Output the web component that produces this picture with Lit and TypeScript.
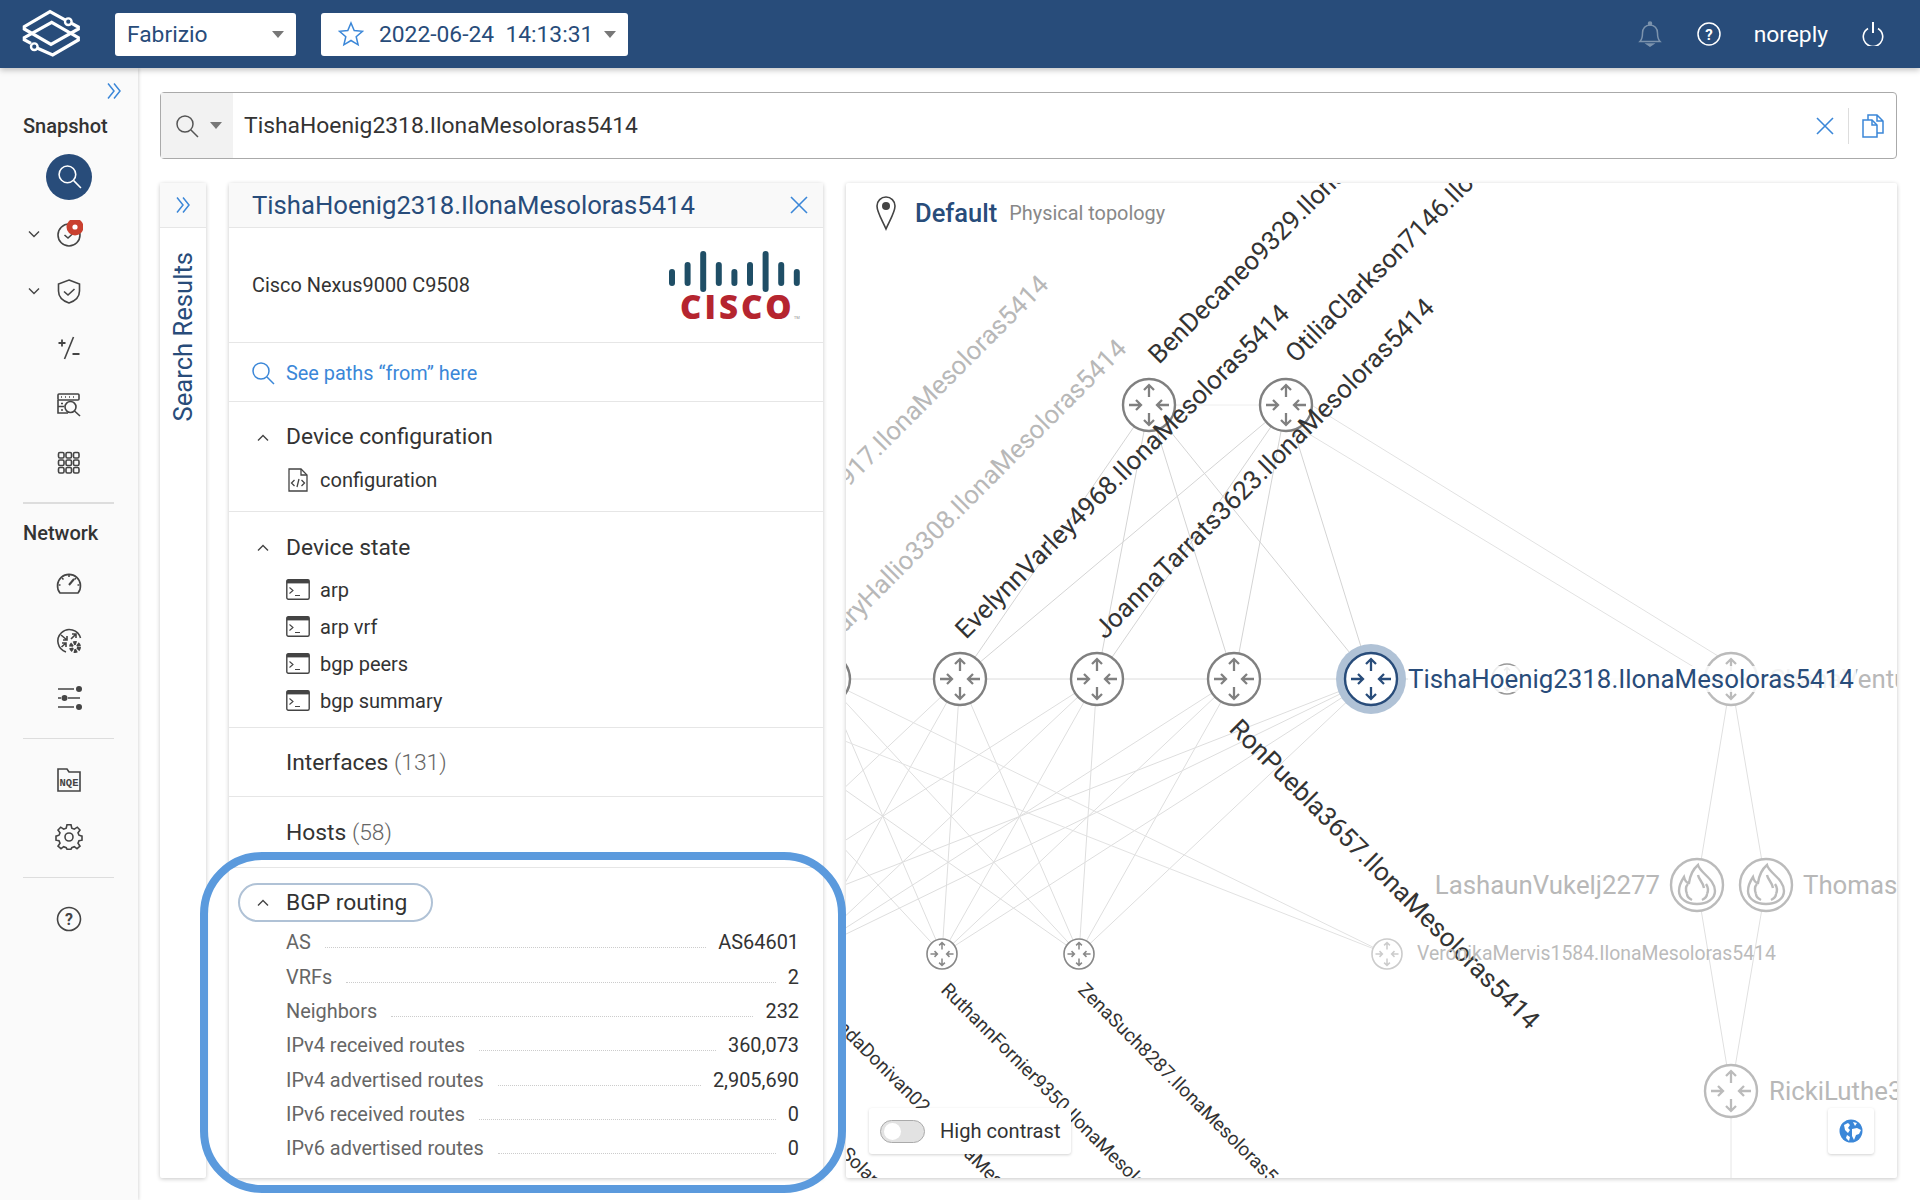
import { LitElement, html, svg, css } from "lit";
import { customElement } from "lit/decorators.js";

const NAVY = "#284c7a";
const tops = [687, 824, 960, 1097, 1234, 1371];
const bots = [668, 805, 942, 1079];

function router(cx: number, cy: number, r: number, c: string, sw = 2.4) {
  const k = r / 26;
  const a = 20 * k, b = 8 * k, h = 5 * k;
  return svg`<g stroke=${c} fill="none" stroke-width=${sw} transform="translate(${cx} ${cy})">
    <circle r=${r} fill="#fff"/>
    <path stroke-width=${sw * 0.95} d="M0 ${-b}V${-a}M${-h} ${-a + h}L0 ${-a}L${h} ${-a + h}
      M0 ${b}V${a}M${-h} ${a - h}L0 ${a}L${h} ${a - h}
      M${-a} 0H${-b}M${-b - h} ${-h}L${-b} 0L${-b - h} ${h}
      M${a} 0H${b}M${b + h} ${-h}L${b} 0L${b + h} ${h}"/>
  </g>`;
}
function fire(cx: number, cy: number) {
  return svg`<g stroke="#bbb" fill="none" stroke-width="2.4" transform="translate(${cx} ${cy})">
    <circle r="26" fill="#fff"/>
    <path d="M1 -20C3 -12 18 -6 18 6C18 14 10 19 0 19C-10 19 -18 14 -18 6C-18 0 -15 -5 -13 -8C-12 -4 -10 -2 -8 -2C-7 -9 -5 -15 1 -20Z"/>
    <path d="M-10 9C-12 4 -11 1 -9 -1M10 9C12 5 11 2 9 -1M-5 15C-9 13 -10 11 -10 9M5 15C9 13 10 11 10 9M1 -10C2 -5 6 -3 7 3"/>
  </g>`;
}
function label(x: number, y: number, t: string, cls: string, rot = 0, anchor = "start") {
  return svg`<text class=${cls} x=${x} y=${y} text-anchor=${anchor} transform="rotate(${rot} ${x} ${y})">${t}</text>`;
}

const ico = (body: unknown, cls = "ico") => html`<svg class=${cls} viewBox="0 0 28 28" fill="none" stroke="#444" stroke-width="1.6">${body}</svg>`;
const term = html`<svg class="term" viewBox="0 0 24 21" fill="none"><rect x=".8" y=".8" width="22.4" height="19.4" rx="1.5" stroke="#444" stroke-width="1.4"/><rect x=".8" y=".8" width="22.4" height="3.6" fill="#444"/><path d="M3.5 8.5L7 11.5L3.5 14.5M9 16.5H14" stroke="#444" stroke-width="1.1"/></svg>`;
const chevUp = html`<svg class="chev" viewBox="0 0 14 10" fill="none" stroke="#444" stroke-width="1.4"><path d="M2 7.5L7 2.5L12 7.5"/></svg>`;
const dblChev = html`<svg class="dbl" viewBox="0 0 16 18" fill="none" stroke="#3b87d8" stroke-width="1.5"><path d="M2 1.5L8 9L2 16.5M8 1.5L14 9L8 16.5"/></svg>`;
const caret = (c: string) => html`<svg class="caret" viewBox="0 0 12 7"><path d="M0 0H12L6 7Z" fill=${c}/></svg>`;
const mag = (c: string, cls = "mag") => html`<svg class=${cls} viewBox="0 0 24 24" fill="none" stroke=${c} stroke-width="1.5"><circle cx="10" cy="10" r="8"/><path d="M16 16L23 23"/></svg>`;
const cross = html`<svg class="x" viewBox="0 0 18 18" fill="none" stroke="#3b87d8" stroke-width="1.6"><path d="M1 1L17 17M17 1L1 17"/></svg>`;

const bgp: [string, string][] = [
  ["AS", "AS64601"], ["VRFs", "2"], ["Neighbors", "232"], ["IPv4 received routes", "360,073"],
  ["IPv4 advertised routes", "2,905,690"], ["IPv6 received routes", "0"], ["IPv6 advertised routes", "0"],
];

@customElement("app-root")
export class AppRoot extends LitElement {
  static styles = css`
    :host { display: flex; flex-direction: column; width: 1920px; height: 1200px; overflow: hidden; position: relative;
      font-family: Roboto, "Liberation Sans", sans-serif; color: #333; background: #fff; }
    .top { height: 68px; flex: none; background: #284c7a; display: flex; align-items: center; box-shadow: 0 2px 6px rgba(0,0,0,.25); position: relative; z-index: 3; }
    .logo { width: 62px; height: 50px; margin-left: 21px; flex: none; }
    .sel { height: 43px; background: #fff; border-radius: 3px; display: flex; align-items: center; color: #284c7a; font-size: 22.8px; box-sizing: border-box; }
    .sel.a { width: 181px; margin-left: 32px; padding: 0 12px; justify-content: space-between; }
    .sel.b { width: 307px; margin-left: 25px; padding: 0 12px 0 17px; }
    .sel.b span { margin-left: 15px; white-space: pre; flex: 1; }
    .caret { width: 12px; height: 7px; flex: none; }
    .star { width: 26px; height: 26px; }
    .right { margin-left: auto; display: flex; align-items: center; color: #fff; font-size: 22.8px; }
    .right svg { display: block; }
    .bell { width: 24px; height: 26px; margin-right: 35px; }
    .help { width: 24px; height: 24px; margin-right: 33px; }
    .power { width: 22px; height: 24px; margin: 0 36px 0 34px; }
    .body { flex: 1; display: flex; min-height: 0; }
    .side { width: 138px; flex: none; background: #fafafa; box-shadow: 1px 0 3px rgba(0,0,0,.15); box-sizing: border-box; display: flex; flex-direction: column; position: relative; z-index: 1; padding-top: 14px; }
    .side .dbl { align-self: flex-end; margin-right: 16px; }
    .dbl { width: 16px; height: 18px; display: block; flex: none; }
    .side h4 { margin: 0 0 0 23px; font-size: 20px; font-weight: 500; line-height: 24px; color: #333; }
    .side .h1 { margin-top: 13.5px; }
    .it { height: 57.2px; display: flex; align-items: center; justify-content: center; position: relative; flex: none; }
    .it .ico { width: 28px; height: 28px; display: block; }
    .it .d { position: absolute; left: 27px; top: 50%; margin-top: -5px; width: 14px; height: 10px; }
    .round { width: 46px; height: 46px; border-radius: 50%; background: #284c7a; display: flex; align-items: center; justify-content: center; }
    .round svg { width: 25px; height: 25px; }
    .sp { height: 1.5px; background: #ddd; width: 91px; margin-left: 23px; flex: none; margin-top: 11px; }
    .s-top { margin-top: 10.5px; }
    .net-h { margin-top: 17px !important; }
    .it.n1 { margin-top: 10.5px; }
    .it.n2 { margin-top: 12px; }
    .it.n3 { margin-top: 12px; }
    .content { flex: 1; padding: 24px 23px 22px 22px; display: flex; flex-direction: column; gap: 24px; min-width: 0; }
    .search { height: 67px; flex: none; border: 1.5px solid #aaa; border-radius: 4px; box-sizing: border-box; display: flex; align-items: center; font-size: 22.85px; }
    .sleft { width: 72px; height: 100%; background: #f2f2f2; display: flex; align-items: center; gap: 11px; padding-left: 14px; box-sizing: border-box; flex: none; }
    .mag { width: 24px; height: 24px; display: block; flex: none; }
    .stext { margin-left: 11px; flex: 1; }
    .x { width: 18px; height: 18px; display: block; flex: none; }
    .vsep { width: 1px; height: 36px; background: #ddd; margin: 0 13px 0 14px; }
    .copy { width: 22px; height: 24px; margin-right: 12px; }
    .cols { flex: 1; display: flex; min-height: 0; }
    .card { background: #fff; box-shadow: 0 1px 4px rgba(0,0,0,.22); border-radius: 2px; }
    .res { width: 46px; flex: none; margin-right: 23px; display: flex; flex-direction: column; }
    .res .hd { height: 45px; background: #f9f9f9; border-bottom: 1.5px solid #e6e6e6; display: flex; align-items: center; justify-content: center; box-sizing: border-box; }
    .res .v { writing-mode: vertical-rl; transform: rotate(180deg); color: #284c7a; font-size: 25.6px; align-self: center; margin-top: 24px; line-height: 28px; }
    .panel { width: 594px; flex: none; margin-right: 23px; display: flex; flex-direction: column; }
    .phd { height: 45px; background: #f9f9f9; border-bottom: 1.5px solid #e6e6e6; display: flex; align-items: center; justify-content: space-between; padding: 0 15px 0 23px; color: #284c7a; font-size: 25.7px; box-sizing: border-box; flex: none; }
    .sec { border-bottom: 1.5px solid #e6e6e6; box-sizing: border-box; flex: none; padding-left: 57px; position: relative; }
    .dev { height: 115px; padding: 0 21px 0 23px; display: flex; align-items: center; justify-content: space-between; font-size: 19.9px; }
    .cisco { width: 134px; height: 72px; display: block; margin-top: 4px; }
    .cisco text { font-family: "Open Sans", sans-serif; font-weight: 800; font-size: 33px; fill: #b5252f; letter-spacing: 3px; }
    .cisco .tm { font-size: 4px; font-weight: 400; letter-spacing: 0; fill: #888; }
    .paths { height: 59px; padding: 2px 0 0 22px; display: flex; align-items: center; color: #3b87d8; font-size: 19.9px; gap: 11px; }
    .title { font-size: 22.8px; line-height: 26px; color: #333; display: block; }
    .title small { font-size: inherit; color: #666; font-weight: 300; }
    .chev { width: 14px; height: 10px; position: absolute; left: 27px; display: block; }
    .s1 { height: 110px; padding-top: 22px; }
    .s1 .chev, .s2 .chev { top: 31px; }
    .s2 { height: 216px; padding-top: 23px; }
    .row { display: flex; align-items: center; height: 37px; font-size: 20px; gap: 10px; }
    .s1 .row { margin-top: 11px; }
    .s2 .rows { margin-top: 10px; }
    .term { width: 24px; height: 21px; display: block; flex: none; }
    .doc { width: 24px; height: 24px; display: block; flex: none; }
    .s3 { height: 69px; padding-top: 22px; }
    .s4 { height: 71px; padding-top: 23px; }
    .bgpwrap { flex: 1; position: relative; padding: 15px 24px 0 57px; }
    .pill { position: absolute; left: 9px; top: 15px; width: 195px; height: 39px; border: 2.5px solid #b0c2d6; border-radius: 20px; box-sizing: border-box; }
    .bgpwrap .chev { top: 30px; left: 27px; }
    .bgpwrap .title { line-height: 39px; position: relative; }
    .kv { display: flex; height: 34.35px; align-items: center; font-size: 19.9px; color: #666; }
    .kv i { flex: 1; border-bottom: 1px dotted #ccc; margin: 10px 12px 0 14px; }
    .kv b { font-weight: 400; color: #333; }
    .rowsb { margin-top: 3.5px; }
    .map { flex: 1; position: relative; overflow: hidden; min-width: 0; }
    .net { position: absolute; inset: 0; width: 100%; height: 100%; display: block; }
    .net text { font-family: Roboto, sans-serif; }
    .l { font-size: 25.9px; fill: #333; }
    .lf { font-size: 25.8px; fill: #b8b8b8; }
    .ls { font-size: 19px; fill: #333; }
    .lsf { font-size: 19.4px; fill: #bbb; }
    .lsel { font-size: 25.85px; fill: #284c7a; }
    .mhd { position: absolute; left: 29px; top: 11px; display: flex; align-items: center; }
    .pin { width: 22px; height: 36px; display: block; margin-top: 1px; }
    .mhd b { font-weight: 500; font-size: 25.5px; color: #284c7a; margin-left: 18px; }
    .mhd span { font-size: 19.9px; color: #888; margin-left: 12px; margin-top: 2px; }
    .hc { position: absolute; left: 23px; bottom: 24px; height: 46px; width: 202px; box-sizing: border-box; display: flex; align-items: center; background: #fff; box-shadow: 0 1px 3px rgba(0,0,0,.18); border-radius: 3px; padding-left: 11px; font-size: 20.1px; gap: 15px; }
    .tog { width: 45px; height: 23px; border-radius: 12px; background: #e2e2e2; border: 1px solid #aaa; box-sizing: border-box; position: relative; flex: none; }
    .tog::after { content: ""; position: absolute; left: 3px; top: 2px; width: 17px; height: 17px; border-radius: 50%; background: #fff; }
    .glb { position: absolute; right: 23px; bottom: 24px; width: 46px; height: 46px; background: #fff; box-shadow: 0 1px 3px rgba(0,0,0,.18); border-radius: 3px; display: flex; align-items: center; justify-content: center; }
    .glb svg { width: 24px; height: 24px; display: block; }
    .ring { position: absolute; left: 199.5px; top: 852px; width: 646px; height: 341px; box-sizing: border-box; border: 8px solid #5b9add; border-radius: 62px; pointer-events: none; z-index: 5; }
  `;

  private edges() {
    const e: [number, number, number, number, string][] = [];
    for (const x of [960, 1097, 1234, 1371]) { e.push([1149, 405, x, 679, "#d4d4d4"]); e.push([1286, 405, x, 679, "#d4d4d4"]); }
    e.push([1149, 405, 1286, 405, "#eee"]);
    e.push([1300, 398, 1731, 664, "#e2e2e2"]);
    e.push([1276, 414, 1702, 672, "#e2e2e2"]);
    e.push([846, 679, 1731, 679, "#dcdcdc"]);
    for (const t of tops) for (const b of bots) {
      if (b === 668 && t > 1097 && t < 1371) continue;
      e.push([t, 679, b, 954, "#dedede"]);
    }
    e.push([824, 679, 1387, 954, "#e2e2e2"]);
    e.push([687, 679, 1387, 954, "#e2e2e2"]);
    for (const x of [1697, 1766]) { e.push([1731, 679, x, 885, "#e0e0e0"]); e.push([x, 885, 1731, 1091, "#e0e0e0"]); }
    e.push([1731, 1091, 1731, 1178, "#e6e6e6"]);
    return e;
  }

  render() {
    return html`
    <div class="top">
      <svg class="logo" viewBox="0 0 62 50" fill="none" stroke="#fff" stroke-width="3.2" stroke-linejoin="miter">
        <path d="M44.500 11.200L29 2.700L3.300 17.700V20L30 35.300L57.300 20V18L50.700 14.300"/>
        <path d="M16 39L31.700 46L57.300 31V28.700L30.700 13.300L3.300 28.700V30.700L10 34.300"/>
        <circle cx="47.300" cy="12.700" r="3.300" stroke-width="2.400" fill="#284c7a"/><circle cx="13.300" cy="37.700" r="3.300" stroke-width="2.400" fill="#284c7a"/>
      </svg>
      <div class="sel a">Fabrizio ${caret("#777")}</div>
      <div class="sel b">
        <svg class="star" viewBox="0 0 26 26" fill="none" stroke="#3b87d8" stroke-width="1.5"><path d="M13 2L16.2 9.6L24.5 10.3L18.2 15.7L20.1 23.8L13 19.5L5.9 23.8L7.8 15.7L1.5 10.3L9.8 9.6Z"/></svg>
        <span>2022-06-24  14:13:31</span>${caret("#777")}
      </div>
      <div class="right">
        <svg class="bell" viewBox="0 0 24 26" fill="none" stroke="#7c93ad" stroke-width="1.5"><path d="M2 20.5H22C19.5 18 19.5 15 19.5 12C19.5 7.5 16.5 4 12 4C7.5 4 4.5 7.5 4.5 12C4.5 15 4.5 18 2 20.5Z"/><circle cx="12" cy="2.5" r="1.5" fill="#7c93ad"/><path d="M9 23H15L12 25Z" fill="#7c93ad"/></svg>
        <svg class="help" viewBox="0 0 24 24" fill="none" stroke="#fff" stroke-width="1.5"><circle cx="12" cy="12" r="11"/><text x="12" y="17.5" text-anchor="middle" font-size="15" font-weight="700" fill="#fff" stroke="none" font-family="Roboto">?</text></svg>
        <span>noreply</span>
        <svg class="power" viewBox="0 0 22 24" fill="none" stroke="#fff" stroke-width="1.6"><path d="M6 6.5A9.7 9.7 0 1 0 16 6.5"/><path d="M11 0V11" stroke-width="2"/></svg>
      </div>
    </div>
    <div class="body">
      <div class="side">
        ${dblChev}
        <h4 class="h1">Snapshot</h4>
        <div class="it s-top"><div class="round">${mag("#fff")}</div></div>
        <div class="it">
          <svg class="d" viewBox="0 0 14 10" fill="none" stroke="#444" stroke-width="1.4"><path d="M2 2.5L7 7.5L12 2.5"/></svg>
          ${ico(svg`<circle cx="14" cy="15" r="11"/><path d="M9.5 15L13 18L18.5 13"/><circle cx="20" cy="7" r="8.5" fill="#c9402f" stroke="none"/><circle cx="20" cy="7" r="2.6" fill="#fff" stroke="none"/>`)}
        </div>
        <div class="it">
          <svg class="d" viewBox="0 0 14 10" fill="none" stroke="#444" stroke-width="1.4"><path d="M2 2.5L7 7.5L12 2.5"/></svg>
          ${ico(svg`<path d="M14 3L24.5 7V14C24.5 20 20 24 14 26C8 24 3.5 20 3.5 14V7Z"/><path d="M9 14.5L13 18L19.5 12"/>`)}
        </div>
        <div class="it">${ico(svg`<path d="M18.5 3L9.5 25"/><path d="M3.5 9H10.5M7 5.5V12.5M17.5 20H24.5" stroke-width="1.8"/>`)}</div>
        <div class="it">${ico(svg`<rect x="3" y="3" width="21" height="6" rx="1"/><path d="M3 9V22H13M3 15.5H9"/><path d="M6 6H7M10 6H11M14 6H15M18 6H19M6 12.5H8M6 19H8" /><circle cx="15.5" cy="16" r="5.5"/><path d="M19.5 20L25 25"/>`)}</div>
        <div class="it">${ico(svg`${[0, 1, 2].map((r) => [0, 1, 2].map((c) => svg`<rect x=${3.5 + c * 7.5} y=${3.5 + r * 7.5} width="5.5" height="5.5" rx="1.4"/>`))}`)}</div>
        <div class="sp"></div>
        <h4 class="net-h">Network</h4>
        <div class="it n1">${ico(svg`<path d="M5 23H23A11.5 11.5 0 1 0 5 23Z"/><path d="M14 15L19 9" stroke-width="2"/><path d="M14 5V7M7 8L8.5 9.5M21 8L19.500 9.500M3.500 15H5.500M22.500 15H24.500"/>`)}</div>
        <div class="it">${ico(svg`<path d="M11 25A11.500 11.500 0 1 1 25.500 11"/><path d="M6 8L12 13M12 9V13H8M21 7L16 12M17 7H21V11M6.500 20L11 16M7 16H11V20"/><circle cx="20" cy="20" r="4" stroke="#444" stroke-width="4" stroke-dasharray="3 1.200"/>`)}</div>
        <div class="it">${ico(svg`<path d="M3 5H19M3 14H6M13 14H25M3 23H19"/><circle cx="24" cy="5" r="3" fill="#444" stroke="none"/><circle cx="9.500" cy="14" r="3" fill="#444" stroke="none"/><circle cx="24" cy="23" r="3" fill="#444" stroke="none"/>`)}</div>
        <div class="sp"></div>
        <div class="it n2">${ico(svg`<path d="M3 25V3H12L14 6H25V25Z"/><text x="14" y="20" text-anchor="middle" font-size="10.500" font-weight="700" fill="#444" stroke="none" font-family="Liberation Mono">NQE</text>`)}</div>
        <div class="it">${ico(svg`<circle cx="14" cy="14" r="4"/><path d="M12 2.500H16L16.800 6L19.300 7L22.300 5L25 7.800L23 10.700L24 13L27 14V18L24 18.600L23 21L25 24L22 26.500L19.300 24.500L16.800 25.500L16 27H12L11.200 25.500L8.700 24.500L6 26.500L3 24L5 21L4 18.600L1 18V14L4 13L5 10.700L3 7.800L5.700 5L8.700 7L11.200 6Z" transform="translate(0 -.8)"/>`)}</div>
        <div class="sp"></div>
        <div class="it n3">${ico(svg`<circle cx="14" cy="14" r="11.500"/><text x="14" y="20" text-anchor="middle" font-size="16" font-weight="700" fill="#444" stroke="none" font-family="Roboto">?</text>`)}</div>
      </div>
      <div class="content">
        <div class="search">
          <div class="sleft">${mag("#555")}${caret("#777")}</div>
          <div class="stext">TishaHoenig2318.IlonaMesoloras5414</div>
          ${cross}
          <div class="vsep"></div>
          <svg class="copy" viewBox="0 0 22 24" fill="none" stroke="#3b87d8" stroke-width="1.500"><path d="M1 6H10L15 11V23H1Z"/><path d="M10 6V11H15"/><path d="M6 6V1H15L21 7V19H15M15 1V7H21"/></svg>
        </div>
        <div class="cols">
          <div class="card res">
            <div class="hd">${dblChev}</div>
            <div class="v">Search Results</div>
          </div>
          <div class="card panel">
            <div class="phd">TishaHoenig2318.IlonaMesoloras5414 ${cross}</div>
            <div class="sec dev">
              <span>Cisco Nexus9000 C9508</span>
              <svg class="cisco" viewBox="0 0 134 72">
                ${[[4, 18, 29], [19.600, 11, 29], [35.200, 0, 35], [50.800, 11, 29], [66.400, 18, 29], [82, 11, 29], [97.600, 0, 35], [113.200, 11, 29], [128.800, 18, 29]].map(([x, y1, y2]) => svg`<line x1=${x} x2=${x} y1=${y1 + 3} y2=${y2 + 3} stroke="#1f4e66" stroke-width="6" stroke-linecap="round"/>`)}
                <text x="12" y="68">CISCO</text><text class="tm" x="126" y="68">TM</text>
              </svg>
            </div>
            <div class="sec paths">${mag("#3b87d8")}See paths “from” here</div>
            <div class="sec s1">${chevUp}<span class="title">Device configuration</span>
              <div class="row"><svg class="doc" viewBox="0 0 24 24" fill="none" stroke="#444" stroke-width="1.300"><path d="M3 1H15L21 7V23H3Z"/><path d="M15 1V7H21"/><path d="M8.500 12L5.500 15L8.500 18M15.500 12L18.500 15L15.500 18M13 11L11 19"/></svg>configuration</div>
            </div>
            <div class="sec s2">${chevUp}<span class="title">Device state</span>
              <div class="rows">
                ${["arp", "arp vrf", "bgp peers", "bgp summary"].map((t) => html`<div class="row">${term}${t}</div>`)}
              </div>
            </div>
            <div class="sec s3"><span class="title">Interfaces <small>(131)</small></span></div>
            <div class="sec s4"><span class="title">Hosts <small>(58)</small></span></div>
            <div class="bgpwrap">
              <div class="pill"></div>${chevUp}
              <span class="title">BGP routing</span>
              <div class="rowsb">${bgp.map(([k, v]) => html`<div class="kv">${k}<i></i><b>${v}</b></div>`)}</div>
            </div>
          </div>
          <div class="card map">
            <svg class="net" viewBox="846 183 1051 995">
              ${this.edges().map(([a, b, c, d, s]) => svg`<line x1=${a} y1=${b} x2=${c} y2=${d} stroke=${s} stroke-width="1"/>`)}
              ${label(1050, 286, "DarrylBoldt8917.IlonaMesoloras5414", "lf", -45, "end")}
              ${label(1128, 350, "MaryHallio3308.IlonaMesoloras5414", "lf", -45, "end")}
              ${router(824, 679, 26, "#808080")}
              ${router(960, 679, 26, "#808080")}${router(1097, 679, 26, "#808080")}${router(1234, 679, 26, "#808080")}
              ${router(1149, 405, 26, "#808080")}${router(1286, 405, 26, "#808080")}
              ${router(942, 954, 15, "#888", 1.600)}${router(1079, 954, 15, "#888", 1.600)}${router(1387, 954, 15, "#ccc", 1.600)}
              ${router(1507, 679, 15, "#999", 1.600)}
              ${router(1731, 679, 26, "#bbb")}${router(1731, 1091, 26, "#bbb")}
              ${fire(1697, 885)}${fire(1766, 885)}
              <circle cx="1371" cy="679" r="35" fill="#b0c2d6"/>
              ${router(1371, 679, 26, NAVY, 2.400)}
              ${label(1159, 365, "BenDecaneo9329.IlonaMesoloras5414", "l", -45)}
              ${label(1296, 364, "OtiliaClarkson7146.IlonaMesoloras5414", "l", -45)}
              ${label(966, 640, "EvelynnVarley4968.IlonaMesoloras5414", "l", -45)}
              ${label(1105, 640, "JoannaTarrats3623.IlonaMesoloras5414", "l", -45)}
              ${label(1228, 730, "RonPuebla3657.IlonaMesoloras5414", "l", 45)}
              ${label(940, 991, "RuthannFornier9350.IlonaMesoloras5414", "ls", 45)}
              ${label(1077, 991, "ZenaSuch8287.IlonaMesoloras5414", "ls", 45)}
              ${label(826, 1018, "LindaDonivan0267.IlonaMesoloras5414", "ls", 45)}
              ${label(840, 1155, "SolangeBoyd1234.IlonaMesoloras5414", "ls", 45)}
              ${label(1417, 960, "VeronikaMervis1584.IlonaMesoloras5414", "lsf")}
              ${label(1660, 894, "LashaunVukelj2277", "lf", 0, "end")}
              ${label(1803, 894, "ThomasRivard", "lf")}
              ${label(1769, 1100, "RickiLuthe3120", "lf")}
              ${label(1770, 688, "ShanaVentura", "lf")}
              <rect x="1408" y="666" width="448" height="26" fill="#fff" opacity=".82"/>
              ${label(1408, 688, "TishaHoenig2318.IlonaMesoloras5414", "lsel")}
            </svg>
            <div class="mhd">
              <svg class="pin" viewBox="0 0 22 36" fill="none" stroke="#444" stroke-width="1.600"><path d="M11 34C7 25 2 17 2 11A9 9 0 0 1 20 11C20 17 15 25 11 34Z"/><circle cx="11" cy="11" r="4" fill="#444" stroke="none"/></svg>
              <b>Default</b><span>Physical topology</span>
            </div>
            <div class="hc"><div class="tog"></div>High contrast</div>
            <div class="glb"><svg viewBox="0 0 24 24"><circle cx="12" cy="12" r="11.500" fill="#3b87d8"/><path d="M5 6L9 4L11 6L9 9L11 11L9 14L6 11ZM14 3L18 4L16 7ZM13 10L18 9L22 11L20 15L17 16L15 21L13 17ZM8 16L11 18L10 22L7 19Z" fill="#fff"/></svg></div>
          </div>
        </div>
      </div>
    </div>
    <div class="ring"></div>`;
  }
}
